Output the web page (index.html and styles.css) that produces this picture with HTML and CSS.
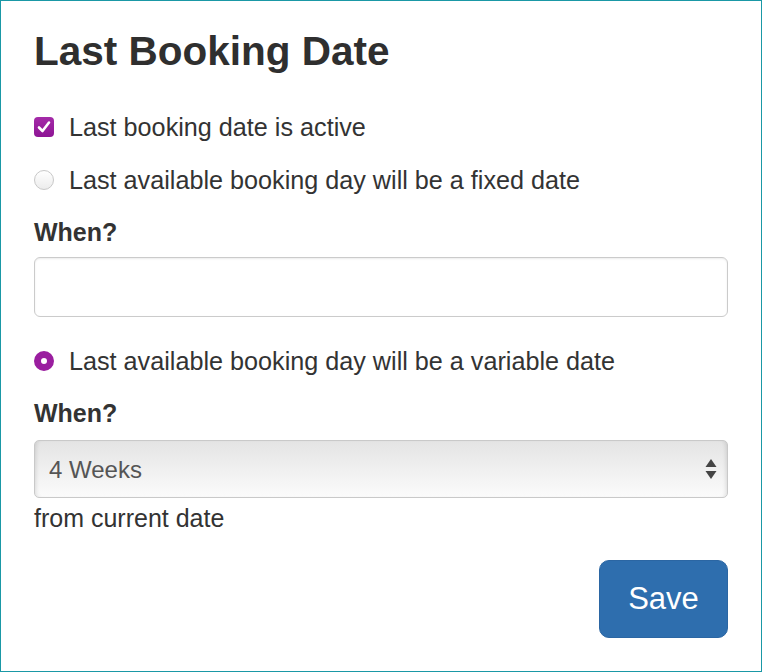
FILE: index.html
```html
<!DOCTYPE html>
<html lang="en">
<head>
  <meta charset="UTF-8" />
  <title>Last Booking Date</title>
  <link rel="stylesheet" href="styles.css">
</head>
<body>
<div class="panel">
  <h1>Last Booking Date</h1>

  <label class="opt opt-first">
    <span class="check">
      <svg width="16" height="16" viewBox="0 0 16 16"><path d="M3 8.5 L6.5 12 L13 3.5" fill="none" stroke="#fff" stroke-width="2.6" stroke-linecap="round" stroke-linejoin="round"/></svg>
    </span>
    Last booking date is active
  </label>

  <label class="opt">
    <span class="radio"></span>
    Last available booking day will be a fixed date
  </label>

  <div class="field-label">When?</div>
  <input class="text-input" type="text">

  <label class="opt opt-variable">
    <span class="radio on"></span>
    Last available booking day will be a variable date
  </label>

  <div class="field-label">When?</div>
  <div class="select-wrap">
    <select class="select">
      <option>4 Weeks</option>
    </select>
    <svg class="arrows" width="12" height="24" viewBox="0 0 12 24"><path d="M6 2 L11.5 10 L0.5 10 Z M0.5 14 L11.5 14 L6 22 Z" fill="#444"/></svg>
  </div>
  <div class="hint">from current date</div>

  <div class="actions">
    <button class="btn">Save</button>
  </div>
</div>
</body>
</html>
```

FILE: styles.css
```css
body {
  margin: 0;
  font-family: "Liberation Sans", Arial, sans-serif;
  color: #333;
  background: #fff;
}
.panel {
  box-sizing: border-box;
  height: 672px;
  border: 1px solid #1a98a6;
  padding: 0 33px;
}
h1 {
  margin: 28px 0 0;
  font-size: 40.5px;
  line-height: 44px;
  font-weight: bold;
  color: #2f2f2f;
}
.opt {
  display: flex;
  align-items: center;
  gap: 15px;
  font-size: 25.2px;
  line-height: 36px;
  margin-top: 17px;
}
.opt-first {
  margin-top: 36px;
}
.opt-variable {
  margin-top: 26px;
}
.check {
  width: 20px;
  height: 20px;
  border-radius: 4px;
  background: linear-gradient(#a42ba8, #8e1595);
  display: flex;
  align-items: center;
  justify-content: center;
}
.radio {
  box-sizing: border-box;
  width: 20px;
  height: 20px;
  border-radius: 50%;
  border: 1px solid #c8c8c8;
  background: linear-gradient(#fff, #ececec);
}
.radio.on {
  border: 7px solid #9a1e9f;
  background: #fff;
}
.field-label {
  font-size: 25px;
  line-height: 36px;
  font-weight: bold;
  margin-top: 16px;
}
.text-input {
  display: block;
  box-sizing: border-box;
  width: 100%;
  height: 60px;
  margin-top: 7px;
  border: 1px solid #cbcbcb;
  border-radius: 6px;
  box-shadow: inset 0 1px 2px rgba(0,0,0,.08);
  font-size: 25px;
}
.select-wrap {
  position: relative;
  margin-top: 9px;
}
.select {
  display: block;
  box-sizing: border-box;
  width: 100%;
  height: 58px;
  appearance: none;
  -webkit-appearance: none;
  border: 1px solid #c9c9c9;
  border-radius: 5px;
  background: linear-gradient(#e4e4e4, #fbfbfb);
  box-shadow: inset 4px 0 4px -3px rgba(0,0,0,.12), inset -4px 0 4px -3px rgba(0,0,0,.12);
  padding: 0 14px;
  font-family: "Liberation Sans", Arial, sans-serif;
  font-size: 24px;
  color: #555;
}
.arrows {
  position: absolute;
  right: 11px;
  top: 17px;
}
.hint {
  font-size: 25px;
  line-height: 36px;
  margin-top: 2px;
}
.actions {
  display: flex;
  justify-content: flex-end;
  margin-top: 24px;
}
.btn {
  width: 129px;
  height: 78px;
  border: 1px solid #2b66a3;
  border-radius: 10px;
  background: #2e6eae;
  color: #fff;
  font-family: "Liberation Sans", Arial, sans-serif;
  font-size: 31px;
}
```
